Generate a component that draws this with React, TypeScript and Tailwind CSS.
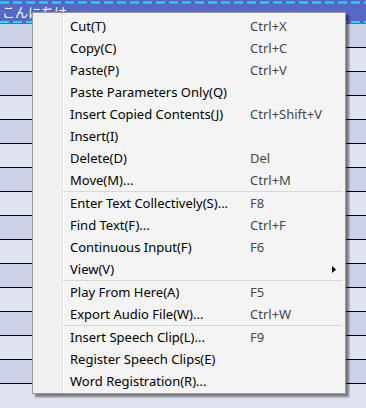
import { Fragment } from "react";

type Item = { label: string; shortcut?: string; submenu?: boolean } | "sep";

const MENU: Item[] = [
  { label: "Cut(T)", shortcut: "Ctrl+X" },
  { label: "Copy(C)", shortcut: "Ctrl+C" },
  { label: "Paste(P)", shortcut: "Ctrl+V" },
  { label: "Paste Parameters Only(Q)" },
  { label: "Insert Copied Contents(J)", shortcut: "Ctrl+Shift+V" },
  { label: "Insert(I)" },
  { label: "Delete(D)", shortcut: "Del" },
  { label: "Move(M)...", shortcut: "Ctrl+M" },
  "sep",
  { label: "Enter Text Collectively(S)...", shortcut: "F8" },
  { label: "Find Text(F)...", shortcut: "Ctrl+F" },
  { label: "Continuous Input(F)", shortcut: "F6" },
  { label: "View(V)", submenu: true },
  "sep",
  { label: "Play From Here(A)", shortcut: "F5" },
  { label: "Export Audio File(W)...", shortcut: "Ctrl+W" },
  "sep",
  { label: "Insert Speech Clip(L)...", shortcut: "F9" },
  { label: "Register Speech Clips(E)" },
  { label: "Word Registration(R)..." },
];

export default function App() {
  const rows = Array.from({ length: 15 }, (_, i) => i);
  return (
    <div className="relative h-[408px] w-[366px] overflow-hidden bg-[#dfe2ef] font-['Noto_Sans',sans-serif]">
      {/* selected header row */}
      <div className="relative h-6 bg-[#5667c6]">
        <span className="absolute left-[2px] top-[4px] font-['Noto_Sans_CJK_JP',sans-serif] text-[13px] leading-4 text-white">
          こんにちは
        </span>
        <svg className="absolute inset-0" width="366" height="24">
          <line x1="0" y1="2.5" x2="366" y2="2.5" stroke="#1ae2f4" strokeWidth="2" strokeDasharray="9 4" />
          <line x1="0" y1="22" x2="366" y2="22" stroke="#1ae2f4" strokeWidth="2" strokeDasharray="9 4" />
        </svg>
      </div>
      {rows.map((i) => (
        <div key={i} className={`h-6 border-b border-black ${i % 2 === 0 ? "bg-[#cbd1e6]" : "bg-[#dfe2ef]"}`} />
      ))}

      {/* context menu */}
      <div className="absolute left-8 top-3 h-[382px] w-[314px] border border-[#979797] bg-[#f4f4f4] pt-[2px] text-[13px] shadow-[3px_3px_2px_rgba(0,0,0,0.45)]">
        <div className="absolute inset-y-0 left-0 w-[30px] border-r border-[#e2e3e3] bg-[#f0f0f0] shadow-[1px_0_0_#ffffff]" />
        {MENU.map((item, idx) =>
          item === "sep" ? (
            <div key={idx} className="relative ml-[30px] mr-[3px] h-px bg-[#d7d7d7]" />
          ) : (
            <Fragment key={idx}>
              <div className="relative flex h-[22px] items-center pl-[37px] pt-[2px]">
                <span className="w-[180px] shrink-0 whitespace-nowrap text-black">{item.label}</span>
                {item.shortcut && <span className="whitespace-nowrap text-[#474747]">{item.shortcut}</span>}
                {item.submenu && (
                  <svg className="absolute right-[9px] top-[8px]" width="4" height="7" viewBox="0 0 4 7">
                    <path d="M0 0 L4 3.5 L0 7 Z" fill="#000" />
                  </svg>
                )}
              </div>
            </Fragment>
          )
        )}
      </div>
    </div>
  );
}
